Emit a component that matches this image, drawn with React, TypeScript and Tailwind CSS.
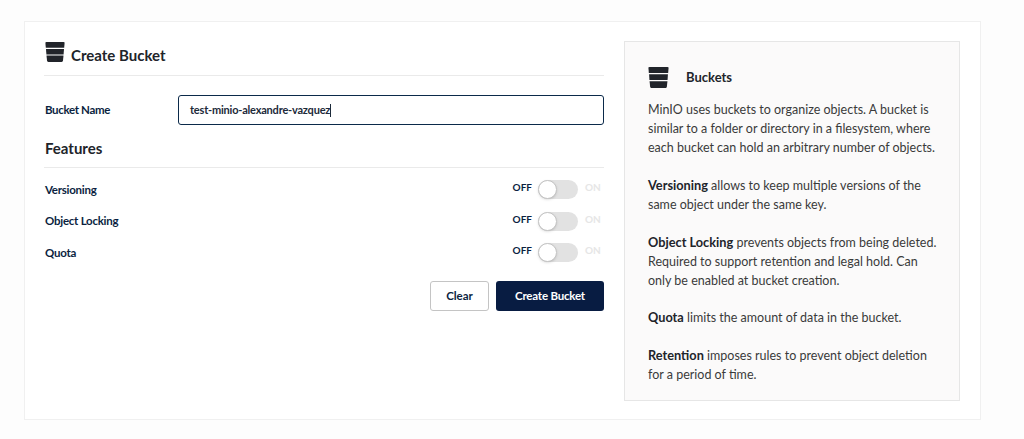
import React from 'react'

function BucketIcon({ className }: { className: string }) {
  return (
    <svg viewBox="0 0 20 20" className={className}>
      <path fill="#21242a" d="M0.4 0.8 C0.4 0.3 0.8 0 1.4 0 H18.6 C19.2 0 19.6 0.3 19.6 0.8 L19.2 5.8 H0.8 Z" />
      <path fill="#21242a" d="M1 7 H19 L18.6 12.4 H1.4 Z" />
      <path fill="#21242a" d="M1.5 13.6 H18.5 L18 18.6 C17.9 19.5 17.4 20 16.6 20 H3.4 C2.6 20 2.1 19.5 2 18.6 Z" />
    </svg>
  )
}

function FeatureRow({ label }: { label: string }) {
  return (
    <div className="flex h-[31.5px] items-center justify-between">
      <span className="-mt-px pl-px text-[11.5px] font-bold tracking-[-0.25px] text-[#0b1f3f]">{label}</span>
      <div className="flex items-center">
        <span className="-mt-[4px] text-[10px] font-bold text-[#0b1f3f]">OFF</span>
        <div className="relative ml-[6px] h-[19px] w-[40px] rounded-full bg-[#e2e2e2]">
          <div className="absolute left-0 top-0 h-[19px] w-[19px] rounded-full border border-[#c4c4c4] bg-white shadow-sm" />
        </div>
        <span className="-mt-[4px] ml-[7px] w-[19px] text-[10px] font-bold text-[#e6e6e6]">ON</span>
      </div>
    </div>
  )
}

export default function App() {
  return (
    <div className="h-[439px] w-[1024px] overflow-hidden bg-[#fdfdfd] pl-6 pt-[21px] font-['Lato',sans-serif]">
      <div className="flex h-[399px] w-[957px] border border-[#f0f0f0] bg-white pl-[19px] pt-[19px]">
        {/* Form */}
        <div className="w-[560px]">
          <div className="flex h-[35px] items-start border-b border-[#eaeaea]">
            <BucketIcon className="ml-px h-5 w-5 mt-px" />
            <h1 className="ml-[6px] mt-[4px] text-[15px] font-bold leading-5 text-[#21242a]">Create Bucket</h1>
          </div>
          <div className="mt-[19px] flex items-center">
            <label className="-mt-px w-[134px] pl-px text-[11.5px] font-bold tracking-[-0.35px] text-[#0b1f3f]">Bucket Name</label>
            <div className="flex h-[30px] w-[426px] items-center rounded-[3px] border border-[#0b2a4a] px-[11px] text-[11px] font-bold tracking-[-0.2px] text-[#1c2a3a]">
              test-minio-alexandre-vazquez
              <span className="h-[13px] w-px bg-[#1c2a3a]" />
            </div>
          </div>
          <h2 className="mt-[13px] h-[29px] pl-px text-[15px] font-bold leading-5 text-[#21242a]">Features</h2>
          <div className="border-b border-[#eaeaea]" />
          <div className="mt-[6px]">
            <FeatureRow label="Versioning" />
            <FeatureRow label="Object Locking" />
            <FeatureRow label="Quota" />
          </div>
          <div className="mt-[12px] flex justify-end gap-[7px]">
            <button className="h-[30px] w-[59px] rounded-[3px] border border-[#c4c4c4] bg-white text-[11.5px] font-bold text-[#0b1f3f]">Clear</button>
            <button className="h-[30px] w-[108px] rounded-[3px] bg-[#081c42] text-[11.5px] font-bold tracking-[-0.2px] text-white">Create Bucket</button>
          </div>
        </div>
        {/* Help panel */}
        <div className="ml-5 h-[360px] w-[336px] border border-[#e6e6e6] bg-[#fbfafa] pl-[23px] pr-4 pt-[24px] text-[12.5px] leading-[19px] text-[#3a3a3a]">
          <div className="flex h-[22px] items-center">
            <BucketIcon className="h-[21px] w-[21px]" />
            <span className="ml-[17px] text-[13px] font-bold text-[#21242a]">Buckets</span>
          </div>
          <p className="mt-[12px]">MinIO uses buckets to organize objects. A bucket is similar to a folder or directory in a filesystem, where each bucket can hold an arbitrary number of objects.</p>
          <p className="mt-[19px]"><b className="text-[12.75px] text-[#21242a]">Versioning</b> allows to keep multiple versions of the same object under the same key.</p>
          <p className="mt-[19px]"><b className="text-[12.75px] text-[#21242a]">Object Locking</b> prevents objects from being deleted. Required to support retention and legal hold. Can only be enabled at bucket creation.</p>
          <p className="mt-[18px]"><b className="text-[12.75px] text-[#21242a]">Quota</b> limits the amount of data in the bucket.</p>
          <p className="mt-[19px]"><b className="text-[12.75px] text-[#21242a]">Retention</b> imposes rules to prevent object deletion for a period of time.</p>
        </div>
      </div>
    </div>
  )
}
